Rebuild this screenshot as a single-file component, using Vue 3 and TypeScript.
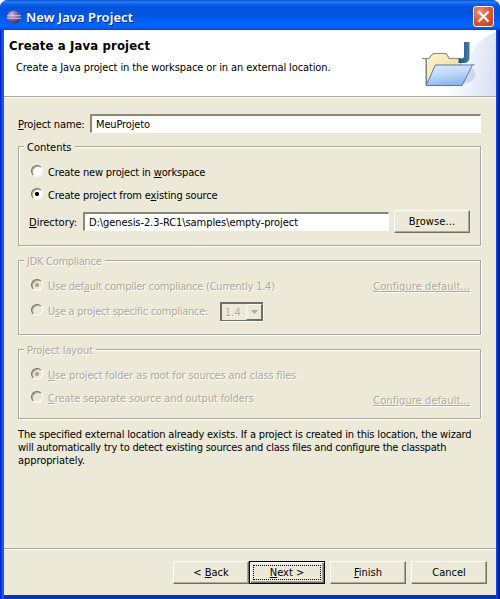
<script setup lang="ts">
import { ref } from 'vue'

const projectName = ref<string>('MeuProjeto')
const directory = ref<string>('D:\\genesis-2.3-RC1\\samples\\empty-project')
</script>

<template>
  <div class="window">
    <header class="titlebar">
      <svg class="app-icon" viewBox="0 0 16 16">
        <defs>
          <radialGradient id="orb" cx=".35" cy=".3" r=".8">
            <stop offset="0" stop-color="#d9c3d0" />
            <stop offset=".45" stop-color="#7a6a9f" />
            <stop offset="1" stop-color="#2a2668" />
          </radialGradient>
        </defs>
        <ellipse cx="8" cy="8" rx="7" ry="6.5" fill="url(#orb)" />
        <path d="M1 6.7h14M1 9.3h14" stroke="#d5c8e4" stroke-width="1.1" />
      </svg>
      <h1 class="title">New Java Project</h1>
      <button class="close" aria-label="Close">
        <svg viewBox="0 0 19 19"><path d="M4.5 4.5l10 10M14.5 4.5l-10 10" stroke="#fff" stroke-width="2.2" /></svg>
      </button>
    </header>

    <main class="client">
      <section class="banner">
        <div class="banner-text">
          <h2>Create a Java project</h2>
          <p class="t-desc">Create a Java project in the workspace or in an external location.</p>
        </div>
        <svg class="banner-art" viewBox="0 0 96 66">
          <defs>
            <linearGradient id="sweep" x1="0" y1=".3" x2="1" y2=".5">
              <stop offset="0" stop-color="#fff" />
              <stop offset=".45" stop-color="#f1f4fb" />
              <stop offset="1" stop-color="#d9e1f3" />
            </linearGradient>
            <linearGradient id="front" x1="0" y1="0" x2=".3" y2="1">
              <stop offset="0" stop-color="#dcecff" />
              <stop offset=".5" stop-color="#c0daf8" />
              <stop offset="1" stop-color="#8fb8ec" />
            </linearGradient>
            <linearGradient id="back" x1="0" y1="0" x2="1" y2="1">
              <stop offset="0" stop-color="#fff3cc" />
              <stop offset="1" stop-color="#ecd698" />
            </linearGradient>
            <linearGradient id="jay" x1="0" y1="0" x2="1" y2="0">
              <stop offset="0" stop-color="#1f5080" />
              <stop offset="1" stop-color="#457ba6" />
            </linearGradient>
          </defs>
          <path d="M96 2C85 6 77 13 71 23C62 38 54 52 46 66H96z" fill="url(#sweep)" />
          <path d="M62 55L72 38Q80 46 70 52z" fill="#c3cce0" opacity=".7" />
          <path d="M26.500 55V28.500H29L32 24.500Q33 23.500 34 23.500H45Q46 23.500 47 24.500L49 28.500H61V54z" fill="url(#back)" stroke="#a39262" />
          <path d="M22 28.500H29L32 24.500Q33 23.500 34 23.500H45Q46 23.500 47 24.500L49 28.500H61" fill="none" stroke="#8b8a86" />
          <path d="M26 29V55" stroke="#607ca3" />
          <path d="M35.500 35H72.500L62 55.500H26z" fill="url(#front)" stroke="#5277ad" />
          <path d="M71 34.500H75" stroke="#9ba3b3" />
          <path d="M64 12H69.500V27Q69.500 33 63.500 33H58.500V28.500H61.500Q64 28.500 64 26z" fill="url(#jay)" />
        </svg>
      </section>

      <section class="body">
        <div class="row name-row">
          <label class="t-name"><u>P</u>roject name:</label>
          <input v-model="projectName" class="field t-value" />
        </div>

        <fieldset class="group contents">
          <legend>Contents</legend>
          <label class="row choice c1"><i class="radio"></i><span class="t-new">Create new project in <u>w</u>orkspace</span></label>
          <label class="row choice c2"><i class="radio on"></i><span class="t-exist">Create project from e<u>x</u>isting source</span></label>
          <div class="row dir-row">
            <label><u>D</u>irectory:</label>
            <input v-model="directory" class="field t-path" />
            <button class="btn browse"><span>B<u>r</u>owse...</span></button>
          </div>
        </fieldset>

        <fieldset class="group jdk off">
          <legend class="t-jdk">JDK Compliance</legend>
          <div class="row choice j1">
            <i class="radio on"></i><span class="t-default">Use def<u>a</u>ult compiler compliance (Currently 1.4)</span>
            <a class="link">Configure default...</a>
          </div>
          <div class="row choice j2">
            <i class="radio"></i><span class="t-specific">U<u>s</u>e a project specific compliance:</span>
            <span class="combo"><span class="combo-value">1.4</span><span class="combo-arrow"><svg viewBox="0 0 7 4"><path d="M0 0h7L3.500 4z" fill="#aca899" /></svg></span></span>
          </div>
        </fieldset>

        <fieldset class="group layout off">
          <legend class="t-layout">Project layout</legend>
          <div class="row choice l1"><i class="radio on"></i><span class="t-root"><u>U</u>se project folder as root for sources and class files</span></div>
          <div class="row choice l2">
            <i class="radio"></i><span class="t-sep"><u>C</u>reate separate source and output folders</span>
            <a class="link low">Configure default...</a>
          </div>
        </fieldset>

        <p class="note">
          <span class="t-n1">The specified external location already exists. If a project is created in this location, the wizard</span><br />
          <span class="t-n2">will automatically try to detect existing sources and class files and configure the classpath</span><br />
          <span class="t-n3">appropriately.</span>
        </p>
      </section>

      <footer class="footer">
        <button class="btn"><span>&lt; <u>B</u>ack</span></button>
        <button class="btn primary"><span class="focus"><u>N</u>ext &gt;</span></button>
        <button class="btn finish"><span><u>F</u>inish</span></button>
        <button class="btn cancel"><span>Cancel</span></button>
      </footer>
    </main>
  </div>
</template>

<style>
body {
  margin: 0;
  background: #fff;
  overflow: hidden;
}
</style>

<style scoped>
* {
  box-sizing: border-box;
}
.window {
  display: flex;
  flex-direction: column;
  width: 500px;
  height: 599px;
  border-radius: 8px 8px 0 0;
  overflow: hidden;
  background: linear-gradient(90deg, #0019cf 0, #0831d9 1px, #166aee 3px, #0855dd 4px, #0855dd 496px, #0441d8 497px, #0029b5 498px, #00138c 500px);
  font: 11px/13px "DejaVu Sans Condensed", "DejaVu Sans", sans-serif;
  color: #000;
  white-space: nowrap;
}
.titlebar {
  display: flex;
  align-items: center;
  height: 30px;
  flex: none;
  padding: 3px 6px 0 6px;
  background: linear-gradient(180deg, #0a4fd0 0, #2a80f8 2px, #0d62ea 4px, #0453de 7px, #0053e1 14px, #005ff5 21px, #0066ff 26px, #005ae8 28px, #0048cc 30px);
}
.app-icon {
  width: 16px;
  height: 16px;
}
.title {
  flex: 1;
  margin: 0 0 0 4px;
  font: 600 13px/18px "Noto Sans", sans-serif;
  letter-spacing: .06px;
  color: #fff;
  text-shadow: 1px 1px 0 #0b2c8c;
}
.close {
  width: 21px;
  height: 21px;
  padding: 0;
  border: 1px solid #fff;
  border-radius: 3px;
  background: radial-gradient(circle at 30% 25%, #f0937a 0, #e2593a 45%, #c93a17 100%);
}
.close svg {
  display: block;
  width: 19px;
  height: 19px;
}
.client {
  display: flex;
  flex-direction: column;
  width: 492px;
  height: 565px;
  margin-left: 4px;
  background: #ece9d8;
  box-shadow: 0 4px 0 #0035bd;
}
.banner {
  display: flex;
  justify-content: space-between;
  height: 67px;
  flex: none;
  background: #fff;
  border-bottom: 1px solid #aca899;
}
.banner-text {
  padding: 7px 0 0 5px;
}
h2 {
  margin: 0;
  font: bold 13px/17px "DejaVu Sans Condensed", sans-serif;
  letter-spacing: .14px;
}
.banner-text p {
  margin: 7px 0 0 7px;
}
.banner-art {
  width: 96px;
  height: 66px;
}
.body {
  flex: 1;
  padding: 16px 14px 0;
  border-top: 1px solid #fff;
}
.row {
  display: flex;
  align-items: flex-start;
}
.row > label, .row > span {
  flex: none;
}
.name-row label {
  width: 72px;
  padding-top: 4px;
}
.field {
  min-width: 0;
  padding: 0 0 0 4px;
  margin: 0;
  background: #fff;
  border: 1px solid #fff;
  border-top: 2px solid #716f64;
  border-left: 2px solid #716f64;
  border-top-color: #8a877a;
  border-left-color: #8a877a;
  border-radius: 0;
  outline: 0;
  color: #000;
  font: inherit;
}
.name-row .field {
  width: 391px;
  height: 19px;
}
.group {
  position: relative;
  width: 463px;
  margin: 0;
  padding: 0;
  border: 1px solid #aca899;
  box-shadow: 1px 1px 0 #fff, inset 1px 1px 0 #fff;
}
.group legend {
  position: absolute;
  top: -6px;
  left: 5px;
  padding: 0 3px;
  background: #ece9d8;
}
.contents {
  height: 100px;
  margin-top: 13px;
}
.jdk {
  height: 75px;
  margin-top: 14px;
}
.layout {
  height: 70px;
  margin-top: 14px;
}
.choice {
  height: 13px;
  padding-left: 12px;
}
.choice > span {
  margin-left: 5px;
  padding-top: 1px;
}
.c1 {
  margin-top: 18px;
}
.c2 {
  margin-top: 10px;
}
.j1 {
  margin-top: 18px;
}
.j2 {
  margin-top: 12px;
}
.l1 {
  margin-top: 18px;
}
.l2 {
  margin-top: 10px;
}
.radio {
  flex: none;
  width: 12px;
  height: 12px;
  border: 1px solid;
  border-color: #716f64 #f6f4ec #f6f4ec #716f64;
  border-radius: 50%;
  background: #fff;
  box-shadow: inset 1px 1px 0 #aca899;
}
.radio.on {
  background: radial-gradient(circle at 50% 50%, #000 0 1.8px, #fff 2.4px);
}
.off .radio {
  background: #ece9d8;
  border-color: #716f64 #fff #fff #716f64;
}
.off .radio.on {
  background: radial-gradient(circle at 50% 50%, #aca899 0 1.8px, #ece9d8 2.4px);
}
.off {
  color: #aca899;
  text-shadow: 1px 1px 0 #fff;
}
.dir-row {
  padding-left: 10px;
  margin-top: 9px;
}
.dir-row label {
  width: 54px;
  padding-top: 6px;
}
.dir-row .field {
  width: 306px;
  height: 19px;
  margin-top: 2px;
}
.btn {
  flex: none;
  display: flex;
  align-items: center;
  justify-content: center;
  width: 76px;
  height: 23px;
  padding: 0;
  border: 1px solid;
  border-color: #fff #716f64 #716f64 #fff;
  box-shadow: inset -1px -1px 0 #aca899;
  border-radius: 0;
  background: #ece9d8;
  color: #000;
  font: inherit;
}
.browse {
  margin-left: 5px;
  letter-spacing: .1px;
}
.btn.primary {
  border-color: #000;
  box-shadow: inset 1px 1px 0 #fff, inset -1px -1px 0 #716f64, inset -2px -2px 0 #aca899;
}
.focus {
  width: 68px;
  height: 15px;
  line-height: 13px;
  border: 1px dotted #000;
}
.link {
  margin-left: auto;
  margin-right: 10px;
  padding-top: 1px;
  letter-spacing: .07px;
  text-decoration: underline;
}
.link.low {
  padding-top: 3px;
}
.combo {
  display: flex;
  width: 43px;
  height: 19px;
  margin-top: -2px;
  border: 2px solid #716f64;
  border-right-width: 1px;
  border-bottom-width: 1px;
  box-shadow: 1px 1px 0 #fff;
}
.choice > .combo {
  margin-left: auto;
  margin-right: 217px;
  padding: 0;
}
.combo-value {
  flex: 1;
  padding: 2px 0 0 3px;
}
.combo-arrow {
  display: flex;
  align-items: center;
  justify-content: center;
  width: 16px;
  border: 1px solid;
  border-color: #fff #716f64 #716f64 #fff;
}
.combo-arrow svg {
  width: 7px;
  height: 4px;
}
.note {
  margin: 9px 0 0;
}
.footer {
  display: flex;
  flex: none;
  height: 47px;
  padding: 12px 9px 0 0;
  justify-content: flex-end;
  border-top: 1px solid #aca899;
  box-shadow: inset 0 1px 0 #fff;
}
.finish, .cancel {
  margin-left: 5px;
}

/* Tracking tuned per string to keep Tahoma's hinted widths */
.t-desc { letter-spacing: -.106px; }
.t-name, .t-value, .t-exist, .t-layout { letter-spacing: -.14px; }
.t-new { letter-spacing: -.16px; }
.t-path { letter-spacing: -.07px; }
.t-jdk { letter-spacing: -.28px; }
.t-default { letter-spacing: -.24px; }
.t-specific { letter-spacing: -.26px; }
.t-root { letter-spacing: -.145px; }
.t-sep { letter-spacing: -.11px; }
.t-n1 { letter-spacing: -.155px; }
.t-n2 { letter-spacing: -.22px; }
.t-n3 { letter-spacing: -.07px; }
</style>
